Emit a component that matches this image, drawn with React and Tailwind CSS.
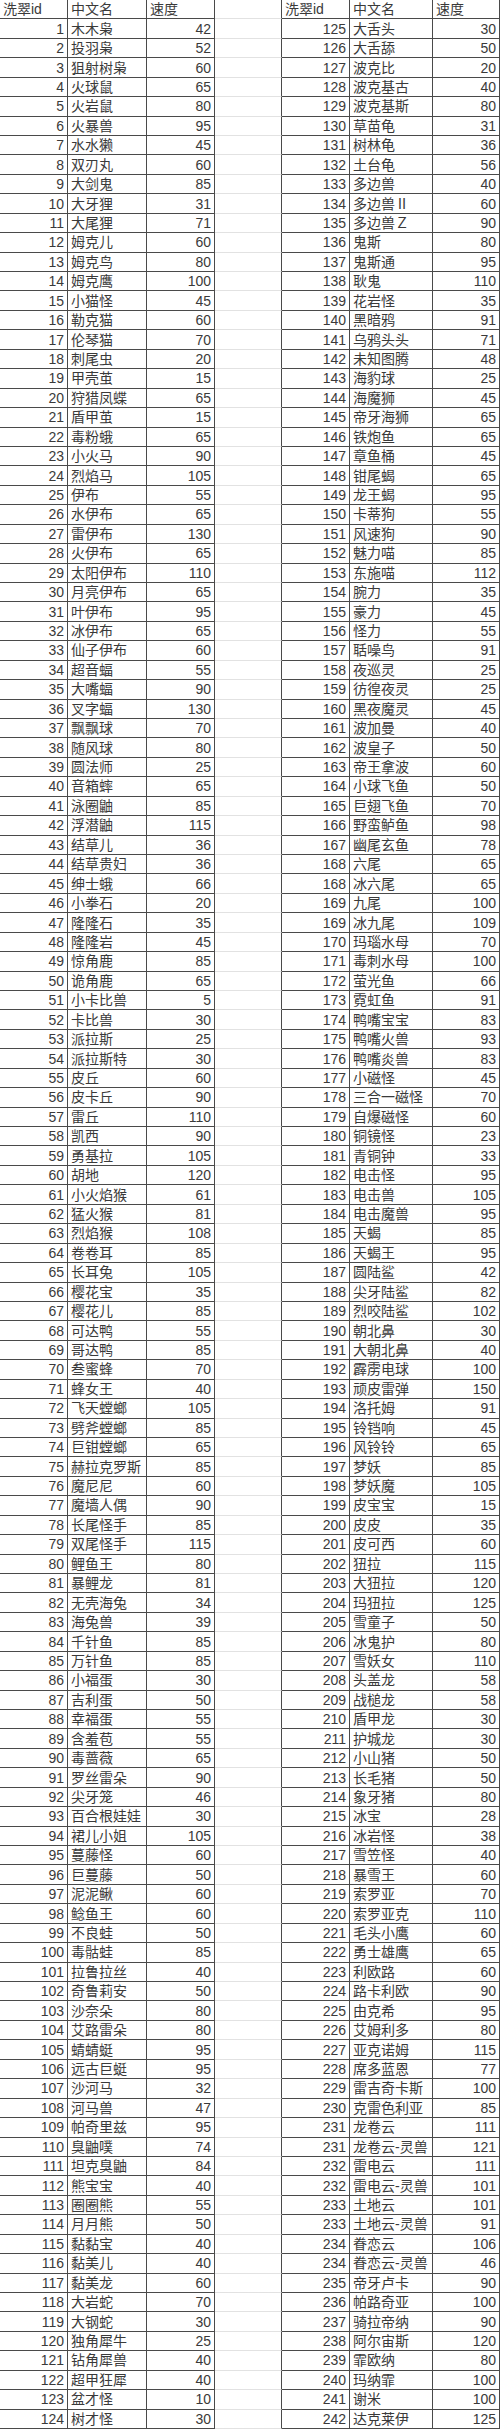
const left = `1,木木枭,42
2,投羽枭,52
3,狙射树枭,60
4,火球鼠,65
5,火岩鼠,80
6,火暴兽,95
7,水水獭,45
8,双刃丸,60
9,大剑鬼,85
10,大牙狸,31
11,大尾狸,71
12,姆克儿,60
13,姆克鸟,80
14,姆克鹰,100
15,小猫怪,45
16,勒克猫,60
17,伦琴猫,70
18,刺尾虫,20
19,甲壳茧,15
20,狩猎凤蝶,65
21,盾甲茧,15
22,毒粉蛾,65
23,小火马,90
24,烈焰马,105
25,伊布,55
26,水伊布,65
27,雷伊布,130
28,火伊布,65
29,太阳伊布,110
30,月亮伊布,65
31,叶伊布,95
32,冰伊布,65
33,仙子伊布,60
34,超音蝠,55
35,大嘴蝠,90
36,叉字蝠,130
37,飘飘球,70
38,随风球,80
39,圆法师,25
40,音箱蟀,65
41,泳圈鼬,85
42,浮潜鼬,115
43,结草儿,36
44,结草贵妇,36
45,绅士蛾,66
46,小拳石,20
47,隆隆石,35
48,隆隆岩,45
49,惊角鹿,85
50,诡角鹿,65
51,小卡比兽,5
52,卡比兽,30
53,派拉斯,25
54,派拉斯特,30
55,皮丘,60
56,皮卡丘,90
57,雷丘,110
58,凯西,90
59,勇基拉,105
60,胡地,120
61,小火焰猴,61
62,猛火猴,81
63,烈焰猴,108
64,卷卷耳,85
65,长耳兔,105
66,樱花宝,35
67,樱花儿,85
68,可达鸭,55
69,哥达鸭,85
70,叁蜜蜂,70
71,蜂女王,40
72,飞天螳螂,105
73,劈斧螳螂,85
74,巨钳螳螂,65
75,赫拉克罗斯,85
76,魔尼尼,60
77,魔墙人偶,90
78,长尾怪手,85
79,双尾怪手,115
80,鲤鱼王,80
81,暴鲤龙,81
82,无壳海兔,34
83,海兔兽,39
84,千针鱼,85
85,万针鱼,85
86,小福蛋,30
87,吉利蛋,50
88,幸福蛋,55
89,含羞苞,55
90,毒蔷薇,65
91,罗丝雷朵,90
92,尖牙笼,46
93,百合根娃娃,30
94,裙儿小姐,105
95,蔓藤怪,60
96,巨蔓藤,50
97,泥泥鳅,60
98,鲶鱼王,60
99,不良蛙,50
100,毒骷蛙,85
101,拉鲁拉丝,40
102,奇鲁莉安,50
103,沙奈朵,80
104,艾路雷朵,80
105,蜻蜻蜓,95
106,远古巨蜓,95
107,沙河马,32
108,河马兽,47
109,帕奇里兹,95
110,臭鼬噗,74
111,坦克臭鼬,84
112,熊宝宝,40
113,圈圈熊,55
114,月月熊,50
115,黏黏宝,40
116,黏美儿,40
117,黏美龙,60
118,大岩蛇,70
119,大钢蛇,30
120,独角犀牛,25
121,钻角犀兽,40
122,超甲狂犀,40
123,盆才怪,10
124,树才怪,30`;

const right = `125,大舌头,30
126,大舌舔,50
127,波克比,20
128,波克基古,40
129,波克基斯,80
130,草苗龟,31
131,树林龟,36
132,土台龟,56
133,多边兽,40
134,多边兽Ⅱ,60
135,多边兽Ｚ,90
136,鬼斯,80
137,鬼斯通,95
138,耿鬼,110
139,花岩怪,35
140,黑暗鸦,91
141,乌鸦头头,71
142,未知图腾,48
143,海豹球,25
144,海魔狮,45
145,帝牙海狮,65
146,铁炮鱼,65
147,章鱼桶,45
148,钳尾蝎,65
149,龙王蝎,95
150,卡蒂狗,55
151,风速狗,90
152,魅力喵,85
153,东施喵,112
154,腕力,35
155,豪力,45
156,怪力,55
157,聒噪鸟,91
158,夜巡灵,25
159,彷徨夜灵,25
160,黑夜魔灵,45
161,波加曼,40
162,波皇子,50
163,帝王拿波,60
164,小球飞鱼,50
165,巨翅飞鱼,70
166,野蛮鲈鱼,98
167,幽尾玄鱼,78
168,六尾,65
168,冰六尾,65
169,九尾,100
169,冰九尾,109
170,玛瑙水母,70
171,毒刺水母,100
172,萤光鱼,66
173,霓虹鱼,91
174,鸭嘴宝宝,83
175,鸭嘴火兽,93
176,鸭嘴炎兽,83
177,小磁怪,45
178,三合一磁怪,70
179,自爆磁怪,60
180,铜镜怪,23
181,青铜钟,33
182,电击怪,95
183,电击兽,105
184,电击魔兽,95
185,天蝎,85
186,天蝎王,95
187,圆陆鲨,42
188,尖牙陆鲨,82
189,烈咬陆鲨,102
190,朝北鼻,30
191,大朝北鼻,40
192,霹雳电球,100
193,顽皮雷弹,150
194,洛托姆,91
195,铃铛响,45
196,风铃铃,65
197,梦妖,85
198,梦妖魔,105
199,皮宝宝,15
200,皮皮,35
201,皮可西,60
202,狃拉,115
203,大狃拉,120
204,玛狃拉,125
205,雪童子,50
206,冰鬼护,80
207,雪妖女,110
208,头盖龙,58
209,战槌龙,58
210,盾甲龙,30
211,护城龙,30
212,小山猪,50
213,长毛猪,50
214,象牙猪,80
215,冰宝,28
216,冰岩怪,38
217,雪笠怪,40
218,暴雪王,60
219,索罗亚,70
220,索罗亚克,110
221,毛头小鹰,60
222,勇士雄鹰,65
223,利欧路,60
224,路卡利欧,90
225,由克希,95
226,艾姆利多,80
227,亚克诺姆,115
228,席多蓝恩,77
229,雷吉奇卡斯,100
230,克雷色利亚,85
231,龙卷云,111
231,龙卷云-灵兽,121
232,雷电云,111
232,雷电云-灵兽,101
233,土地云,101
233,土地云-灵兽,91
234,眷恋云,106
234,眷恋云-灵兽,46
235,帝牙卢卡,90
236,帕路奇亚,100
237,骑拉帝纳,90
238,阿尔宙斯,120
239,霏欧纳,80
240,玛纳霏,100
241,谢米,100
242,达克莱伊,125`;

const parse = (s) => s.split('\n').map((line) => line.split(','));

const leftRows = parse(left);
const rightRows = parse(right);

const cell = 'flex items-center overflow-hidden whitespace-nowrap leading-none text-[14px] border-b border-r border-[#4a4a4a]';
const num = cell + ' justify-end pr-[3px]';
const name = cell + ' pl-[3px]';
const gap = 'border-b border-b-[#e2e2e2] border-r border-r-[#4a4a4a]';

export default function App() {
  return (
    <div
      className="w-[500px] h-[2429px] bg-white text-[#3a3a3a] grid grid-cols-[68px_79px_68px_67px_68px_83px_67px] grid-rows-[repeat(125,minmax(0,1fr))]"
      style={{ fontFamily: '"Liberation Sans", "Noto Sans CJK SC", sans-serif' }}
    >
      <div className={name}>洗翠id</div>
      <div className={name}>中文名</div>
      <div className={name}>速度</div>
      <div className={gap}></div>
      <div className={name}>洗翠id</div>
      <div className={name}>中文名</div>
      <div className={name}>速度</div>

      {leftRows.map((l, i) => {
        const r = rightRows[i];
        return [
          <div key={'a' + i} className={num}>{l[0]}</div>,
          <div key={'b' + i} className={name}>{l[1]}</div>,
          <div key={'c' + i} className={num}>{l[2]}</div>,
          <div key={'d' + i} className={gap}></div>,
          <div key={'e' + i} className={num}>{r[0]}</div>,
          <div key={'f' + i} className={name}>{r[1]}</div>,
          <div key={'g' + i} className={num}>{r[2]}</div>,
        ];
      })}
    </div>
  );
}
